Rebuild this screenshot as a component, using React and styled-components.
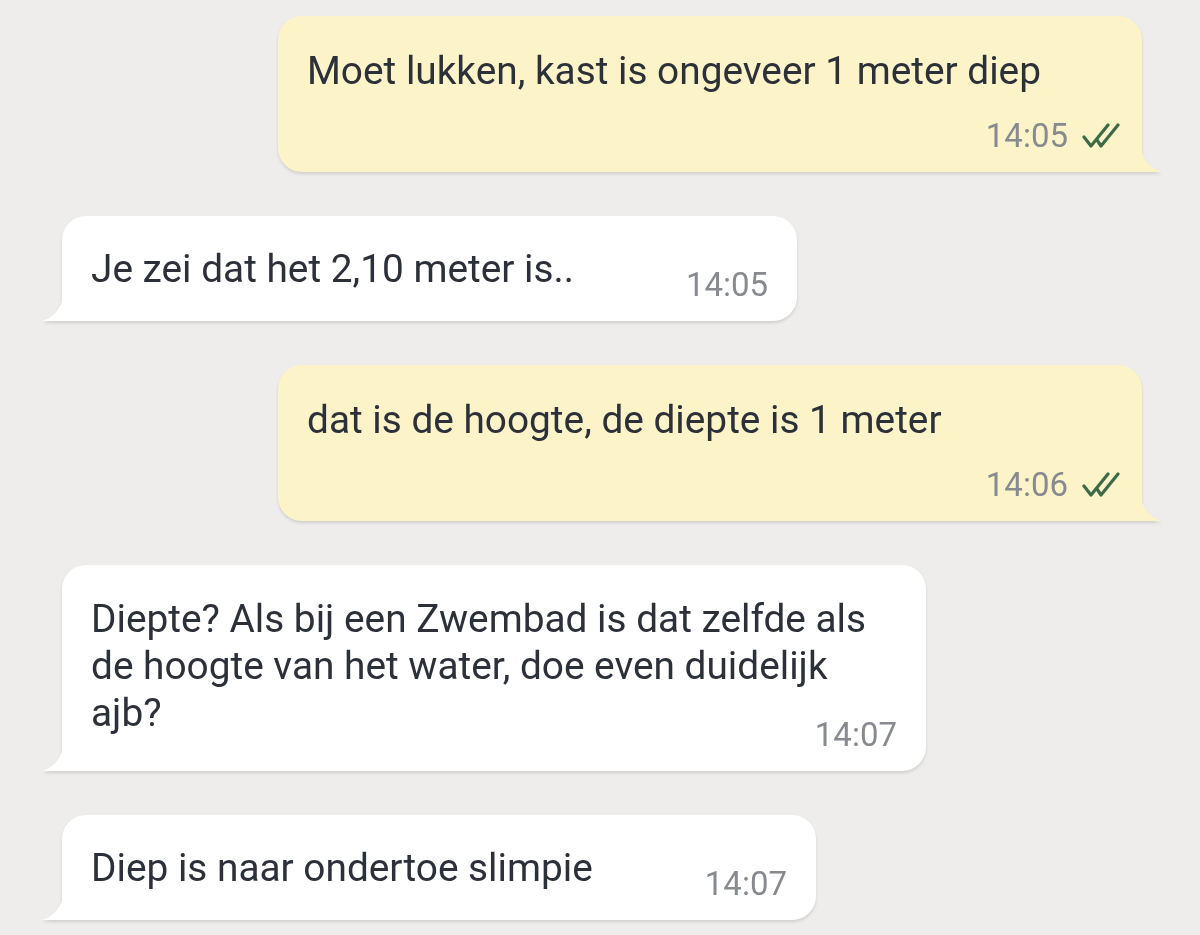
import React from "react";
import styled, { createGlobalStyle, css } from "styled-components";

const Global = createGlobalStyle`
  html, body { margin: 0; padding: 0; background: #eeedeb; }
  body { font-family: Roboto, "Noto Sans", "Liberation Sans", sans-serif; }
`;

const Thread = styled.div`
  display: flex;
  flex-direction: column;
  gap: 44px;
  padding: 16px 0 20px;
  width: 1200px;
  min-height: 935px;
  box-sizing: border-box;
  background: #eeedeb;
`;

const Bubble = styled.div`
  position: relative;
  box-sizing: border-box;
  font-size: 38.8px;
  line-height: 46px;
  color: #2c3038;
  filter: drop-shadow(0 2px 1.5px rgba(0, 0, 0, 0.12));
  &::after {
    content: "";
    position: absolute;
    bottom: 0;
    width: 21px;
    height: 22px;
  }
  ${(p) =>
    p.$out
      ? css`
          margin-left: 278px;
          width: 864px;
          background: #fdf3c8;
          border-radius: 24px 24px 0 24px;
          padding: 31px 22px 13px 29px;
          &::after {
            right: -20px;
            background: #fdf3c8;
            clip-path: path("M0 0 C 3 10, 10 19, 21 22 L 0 22 Z");
          }
        `
      : css`
          margin-left: 62px;
          align-self: flex-start;
          max-width: 864px;
          background: #ffffff;
          border-radius: 24px 24px 24px 0;
          padding: 30px 29px 13px 29px;
          &::after {
            left: -20px;
            background: #ffffff;
            clip-path: path("M21 0 C 18 10, 11 19, 0 22 L 21 22 Z");
          }
        `}
`;

const Row = styled.div`
  display: ${(p) => (p.$wrap ? "block" : "flex")};
  align-items: flex-start;
`;

const Text = styled.div`
  margin-right: ${(p) => (p.$wrap ? "0" : "112px")};
  line-height: ${(p) => (p.$wrap ? "47px" : "46px")};
`;

const Meta = styled.div`
  display: flex;
  align-items: center;
  justify-content: flex-end;
  gap: 14px;
  font-size: 33px;
  line-height: 46px;
  height: 46px;
  color: #878a8f;
  white-space: nowrap;
  ${(p) =>
    p.$out
      ? css`
          margin-top: 19px;
        `
      : p.$wrap
      ? css`
          margin-top: -24px;
        `
      : css`
          margin-top: 16px;
        `}
`;

const Check = () => (
  <svg width="38" height="28" viewBox="0 0 38 28" fill="none">
    <path
      d="M2 15 L9 24 L26 3"
      stroke="#3e6a48"
      strokeWidth="3.2"
      strokeLinecap="round"
      strokeLinejoin="round"
    />
    <path
      d="M15 18 L19 24 L36 3"
      stroke="#3e6a48"
      strokeWidth="3.2"
      strokeLinecap="round"
      strokeLinejoin="round"
    />
  </svg>
);

const Sent = ({ text, time }) => (
  <Bubble $out>
    <Text $wrap>{text}</Text>
    <Meta $out>
      <span>{time}</span>
      <Check />
    </Meta>
  </Bubble>
);

const Received = ({ text, time, wrap }) => (
  <Bubble>
    <Row $wrap={wrap}>
      <Text $wrap={wrap}>{text}</Text>
      <Meta $wrap={wrap}>{time}</Meta>
    </Row>
  </Bubble>
);

export default function App() {
  return (
    <>
      <Global />
      <Thread>
        <Sent text="Moet lukken, kast is ongeveer 1 meter diep" time="14:05" />
        <Received text="Je zei dat het 2,10 meter is.." time="14:05" />
        <Sent text="dat is de hoogte, de diepte is 1 meter" time="14:06" />
        <Received
          wrap
          text="Diepte? Als bij een Zwembad is dat zelfde als de hoogte van het water, doe even duidelijk ajb?"
          time="14:07"
        />
        <Received text="Diep is naar ondertoe slimpie" time="14:07" />
      </Thread>
    </>
  );
}
